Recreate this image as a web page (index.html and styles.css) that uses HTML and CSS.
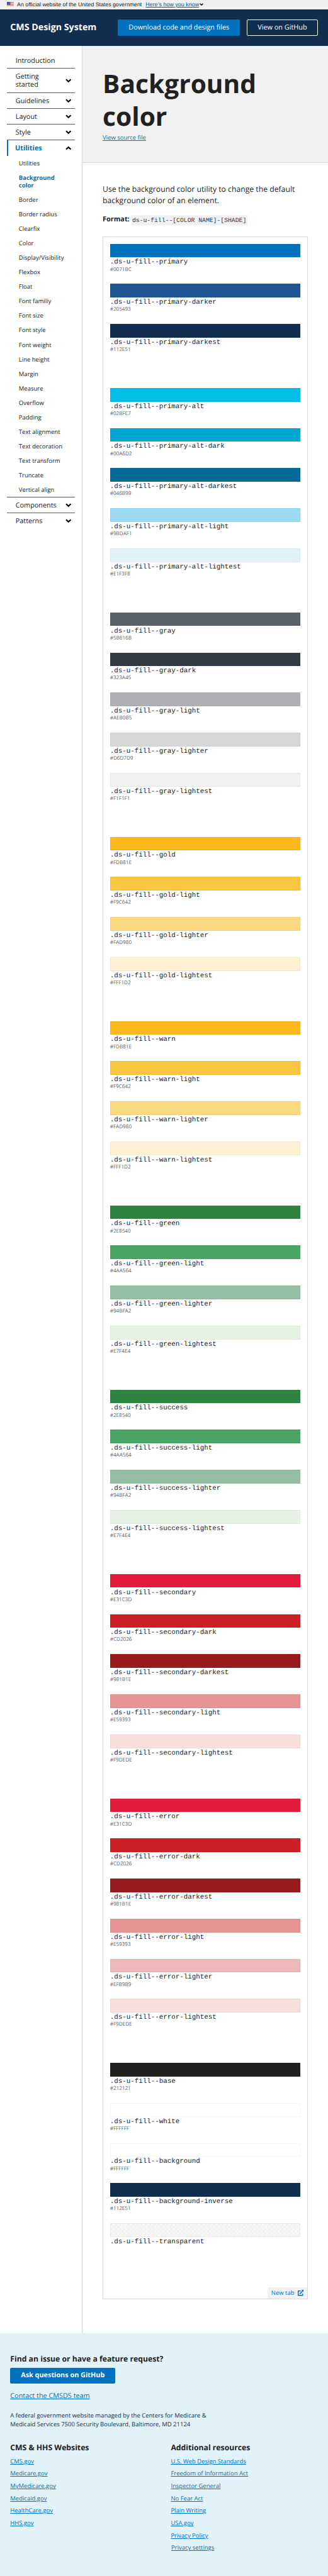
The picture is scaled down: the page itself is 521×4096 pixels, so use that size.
FILE: index.html
```html
<!DOCTYPE html>
<html lang="en">
<head>
<meta charset="utf-8">
<title>Background color - CMS Design System</title>
<link rel="stylesheet" href="styles.css">
</head>
<body>
<svg class="defs" width="0" height="0" aria-hidden="true">
  <symbol id="down" viewBox="0 0 14 10"><path d="M1.5 1.8 7 7.1l5.500-5.300" fill="none" stroke="currentColor" stroke-width="3.300"/></symbol>
  <symbol id="up" viewBox="0 0 14 10"><path d="M1.5 8.200 7 2.900l5.500 5.300" fill="none" stroke="currentColor" stroke-width="3.300"/></symbol>
</svg>

<div class="banner">
  <svg class="flag" viewBox="0 0 16 11"><path fill="#fff" d="M0 0h16v11H0z"/><path stroke="#db3e1f" d="M0 .5h16M0 2.500h16M0 4.500h16M0 6.500h16M0 8.500h16M0 10.500h16"/><path fill="#1e33b1" d="M0 0h8v7H0z"/><path stroke="#fff" stroke-width=".8" stroke-dasharray=".8 1.200" d="M.8 1.200h7M1.800 2.800h6M.8 4.400h7M1.800 5.900h6"/></svg>
  <span class="official">An official website of the United States government</span>
  <a class="know" href="#">Here’s how you know</a>
  <svg class="know-icon"><use href="#down"/></svg>
</div>

<header class="header">
  <div class="brand">CMS Design System</div>
  <div class="actions">
    <a class="button" href="#">Download code and design files</a>
    <a class="button button-inverse" href="#">View on GitHub</a>
  </div>
</header>

<div class="layout">
  <nav class="nav">
    <a class="item" href="#">Introduction</a>
    <a class="item" href="#"><span>Getting<br>started</span><svg class="chevron"><use href="#down"/></svg></a>
    <a class="item" href="#">Guidelines<svg class="chevron"><use href="#down"/></svg></a>
    <a class="item" href="#">Layout<svg class="chevron"><use href="#down"/></svg></a>
    <a class="item" href="#">Style<svg class="chevron"><use href="#down"/></svg></a>
    <a class="item item-open" href="#">Utilities<svg class="chevron"><use href="#up"/></svg></a>
    <div class="subnav">
      <a href="#">Utilities</a>
      <a class="current" href="#">Background<br>color</a>
      <a href="#">Border</a>
      <a href="#">Border radius</a>
      <a href="#">Clearfix</a>
      <a href="#">Color</a>
      <a href="#">Display/Visibility</a>
      <a href="#">Flexbox</a>
      <a href="#">Float</a>
      <a href="#">Font familiy</a>
      <a href="#">Font size</a>
      <a href="#">Font style</a>
      <a href="#">Font weight</a>
      <a href="#">Line height</a>
      <a href="#">Margin</a>
      <a href="#">Measure</a>
      <a href="#">Overflow</a>
      <a href="#">Padding</a>
      <a href="#">Text alignment</a>
      <a href="#">Text decoration</a>
      <a href="#">Text transform</a>
      <a href="#">Truncate</a>
      <a href="#">Vertical align</a>
    </div>
    <a class="item" href="#">Components<svg class="chevron"><use href="#down"/></svg></a>
    <a class="item item-last" href="#">Patterns<svg class="chevron"><use href="#down"/></svg></a>
  </nav>

  <main class="main">
    <div class="hero">
      <h1>Background<br>color</h1>
      <a class="source" href="#">View source file</a>
    </div>
    <div class="content">
      <p class="lead">Use the background color utility to change the default<br>background color of an element.</p>
      <p class="format"><b>Format:</b> <code>ds-u-fill--[COLOR NAME]-[SHADE]</code></p>

      <div class="example">
        <section class="group">
          <div class="swatch"><i class="bar blue"></i><code>.ds-u-fill--primary</code><small>#0071BC</small></div>
          <div class="swatch"><i class="bar blue-darker"></i><code>.ds-u-fill--primary-darker</code><small>#205493</small></div>
          <div class="swatch"><i class="bar navy"></i><code>.ds-u-fill--primary-darkest</code><small>#112E51</small></div>
        </section>
        <section class="group">
          <div class="swatch"><i class="bar cyan"></i><code>.ds-u-fill--primary-alt</code><small>#02BFE7</small></div>
          <div class="swatch"><i class="bar cyan-dark"></i><code>.ds-u-fill--primary-alt-dark</code><small>#00A6D2</small></div>
          <div class="swatch"><i class="bar cyan-darkest"></i><code>.ds-u-fill--primary-alt-darkest</code><small>#046B99</small></div>
          <div class="swatch"><i class="bar cyan-light"></i><code>.ds-u-fill--primary-alt-light</code><small>#9BDAF1</small></div>
          <div class="swatch"><i class="bar cyan-lightest"></i><code>.ds-u-fill--primary-alt-lightest</code><small>#E1F3F8</small></div>
        </section>
        <section class="group">
          <div class="swatch"><i class="bar gray"></i><code>.ds-u-fill--gray</code><small>#5B616B</small></div>
          <div class="swatch"><i class="bar gray-dark"></i><code>.ds-u-fill--gray-dark</code><small>#323A45</small></div>
          <div class="swatch"><i class="bar gray-light"></i><code>.ds-u-fill--gray-light</code><small>#AEB0B5</small></div>
          <div class="swatch"><i class="bar gray-lighter"></i><code>.ds-u-fill--gray-lighter</code><small>#D6D7D9</small></div>
          <div class="swatch"><i class="bar gray-lightest"></i><code>.ds-u-fill--gray-lightest</code><small>#F1F1F1</small></div>
        </section>
        <section class="group">
          <div class="swatch"><i class="bar gold"></i><code>.ds-u-fill--gold</code><small>#FDB81E</small></div>
          <div class="swatch"><i class="bar gold-light"></i><code>.ds-u-fill--gold-light</code><small>#F9C642</small></div>
          <div class="swatch"><i class="bar gold-lighter"></i><code>.ds-u-fill--gold-lighter</code><small>#FAD980</small></div>
          <div class="swatch"><i class="bar gold-lightest"></i><code>.ds-u-fill--gold-lightest</code><small>#FFF1D2</small></div>
        </section>
        <section class="group">
          <div class="swatch"><i class="bar gold"></i><code>.ds-u-fill--warn</code><small>#FDB81E</small></div>
          <div class="swatch"><i class="bar gold-light"></i><code>.ds-u-fill--warn-light</code><small>#F9C642</small></div>
          <div class="swatch"><i class="bar gold-lighter"></i><code>.ds-u-fill--warn-lighter</code><small>#FAD980</small></div>
          <div class="swatch"><i class="bar gold-lightest"></i><code>.ds-u-fill--warn-lightest</code><small>#FFF1D2</small></div>
        </section>
        <section class="group">
          <div class="swatch"><i class="bar green"></i><code>.ds-u-fill--green</code><small>#2E8540</small></div>
          <div class="swatch"><i class="bar green-light"></i><code>.ds-u-fill--green-light</code><small>#4AA564</small></div>
          <div class="swatch"><i class="bar green-lighter"></i><code>.ds-u-fill--green-lighter</code><small>#94BFA2</small></div>
          <div class="swatch"><i class="bar green-lightest"></i><code>.ds-u-fill--green-lightest</code><small>#E7F4E4</small></div>
        </section>
        <section class="group">
          <div class="swatch"><i class="bar green"></i><code>.ds-u-fill--success</code><small>#2E8540</small></div>
          <div class="swatch"><i class="bar green-light"></i><code>.ds-u-fill--success-light</code><small>#4AA564</small></div>
          <div class="swatch"><i class="bar green-lighter"></i><code>.ds-u-fill--success-lighter</code><small>#94BFA2</small></div>
          <div class="swatch"><i class="bar green-lightest"></i><code>.ds-u-fill--success-lightest</code><small>#E7F4E4</small></div>
        </section>
        <section class="group">
          <div class="swatch"><i class="bar red"></i><code>.ds-u-fill--secondary</code><small>#E31C3D</small></div>
          <div class="swatch"><i class="bar red-dark"></i><code>.ds-u-fill--secondary-dark</code><small>#CD2026</small></div>
          <div class="swatch"><i class="bar red-darkest"></i><code>.ds-u-fill--secondary-darkest</code><small>#981B1E</small></div>
          <div class="swatch"><i class="bar red-light"></i><code>.ds-u-fill--secondary-light</code><small>#E59393</small></div>
          <div class="swatch"><i class="bar red-lightest"></i><code>.ds-u-fill--secondary-lightest</code><small>#F9DEDE</small></div>
        </section>
        <section class="group">
          <div class="swatch"><i class="bar red"></i><code>.ds-u-fill--error</code><small>#E31C3D</small></div>
          <div class="swatch"><i class="bar red-dark"></i><code>.ds-u-fill--error-dark</code><small>#CD2026</small></div>
          <div class="swatch"><i class="bar red-darkest"></i><code>.ds-u-fill--error-darkest</code><small>#981B1E</small></div>
          <div class="swatch"><i class="bar red-light"></i><code>.ds-u-fill--error-light</code><small>#E59393</small></div>
          <div class="swatch"><i class="bar red-lighter"></i><code>.ds-u-fill--error-lighter</code><small>#EFB9B9</small></div>
          <div class="swatch"><i class="bar red-lightest"></i><code>.ds-u-fill--error-lightest</code><small>#F9DEDE</small></div>
        </section>
        <section class="group">
          <div class="swatch"><i class="bar base"></i><code>.ds-u-fill--base</code><small>#212121</small></div>
          <div class="swatch"><i class="bar white"></i><code>.ds-u-fill--white</code><small>#FFFFFF</small></div>
          <div class="swatch"><i class="bar white"></i><code>.ds-u-fill--background</code><small>#FFFFFF</small></div>
          <div class="swatch"><i class="bar navy"></i><code>.ds-u-fill--background-inverse</code><small>#112E51</small></div>
          <div class="swatch"><i class="bar checker"></i><code>.ds-u-fill--transparent</code></div>
        </section>
        <a class="new-tab" href="#">New tab
          <svg class="external" viewBox="0 0 14 14"><path d="M6.800 2.600H1.100v10.300h10.300V9" fill="none" stroke="currentColor" stroke-width="2.100"/><path d="M4.800 9.500 11 3.300" fill="none" stroke="currentColor" stroke-width="2.400"/><path d="M8 0h6v6z" fill="currentColor"/></svg>
        </a>
      </div>
    </div>
  </main>
</div>

<footer class="footer">
  <h2>Find an issue or have a feature request?</h2>
  <a class="button button-ask" href="#">Ask questions on GitHub</a>
  <a class="contact" href="#">Contact the CMSDS team</a>
  <p class="address">A federal government website managed by the Centers for Medicare &amp;<br>Medicaid Services 7500 Security Boulevard, Baltimore, MD 21124</p>
  <div class="columns">
    <div class="column">
      <h2>CMS &amp; HHS Websites</h2>
      <ul>
        <li><a href="#">CMS.gov</a></li>
        <li><a href="#">Medicare.gov</a></li>
        <li><a href="#">MyMedicare.gov</a></li>
        <li><a href="#">Medicaid.gov</a></li>
        <li><a href="#">HealthCare.gov</a></li>
        <li><a href="#">HHS.gov</a></li>
      </ul>
    </div>
    <div class="column">
      <h2>Additional resources</h2>
      <ul>
        <li><a href="#">U.S. Web Design Standards</a></li>
        <li><a href="#">Freedom of Information Act</a></li>
        <li><a href="#">Inspector General</a></li>
        <li><a href="#">No Fear Act</a></li>
        <li><a href="#">Plain Writing</a></li>
        <li><a href="#">USA.gov</a></li>
        <li><a href="#">Privacy Policy</a></li>
        <li class="settings"><a href="#">Privacy settings</a></li>
      </ul>
    </div>
  </div>
</footer>
</body>
</html>
```
FILE: styles.css
```css
* { box-sizing: border-box; }

html { font-size: 6.7845px; }

body {
  margin: 0;
  background: #fff;
  color: #212121;
  font: 1.6rem/1.5 "Open Sans", sans-serif;
  text-rendering: geometricPrecision;
}

h1, h2, p, ul { margin: 0; padding: 0; font-weight: 400; }
ul { list-style: none; }
a { color: #0071bc; text-underline-offset: auto; text-decoration-thickness: 1px; }
.defs { display: block; position: absolute; }

/* Government banner */
.banner {
  display: flex;
  align-items: center;
  height: 2.2rem;
  padding-left: 1.6rem;
  background: #f0f0f0;
  font-family: "Liberation Sans", Arial, sans-serif;
  font-size: 1.293rem;
  line-height: 2.2rem;
  white-space: nowrap;
}
.flag { width: 1.6rem; height: 1.1rem; margin: -.3rem .8rem 0 0; }
.official { width: 30.1rem; }
.know { font-size: 1.32rem; color: #005ea2; }
.know-icon { width: .9rem; height: .65rem; margin-left: .2rem; color: #000; }

/* Site header */
.header {
  display: flex;
  justify-content: space-between;
  align-items: center;
  height: 8.6rem;
  padding: 0 2.4rem;
  background: #112e51;
  white-space: nowrap;
}
.brand { color: #fff; font-size: 2.1rem; font-weight: 700; }
.actions { display: flex; gap: 1.6rem; }
.button {
  display: flex;
  align-items: center;
  justify-content: center;
  width: 28.6rem;
  height: 3.8rem;
  border-radius: .3rem;
  background: #0071bc;
  color: #fff;
  font-size: 1.6rem;
  text-decoration: none;
  white-space: nowrap;
}
.button-inverse { width: 16.6rem; border: 1px solid #fff; background: transparent; }

/* Page columns */
.layout { display: flex; height: 536.1rem; }
.nav {
  flex: 0 0 19.2rem;
  padding: 1.58rem 1.6rem 0;
  border-right: 1px solid #d6d7d9;
}
.item {
  display: flex;
  align-items: center;
  justify-content: space-between;
  width: 15.9rem;
  min-height: 3.7rem;
  padding: .85rem .8rem .85rem 2.05rem;
  box-shadow: inset 0 -1px #5b616b;
  color: #212121;
  line-height: 2rem;
  text-decoration: none;
}
.item + .item { min-height: 3.7rem; }
.chevron { flex: none; width: 1.4rem; height: 1rem; color: #000; }
.item-open {
  padding-left: 1.65rem;
  border-left: .4rem solid #0071bc;
  box-shadow: none;
  color: #0071bc;
  font-weight: 700;
}
.item-last { box-shadow: none; }
.subnav { width: 15.9rem; box-shadow: inset 0 -1px #5b616b; }
.subnav a {
  display: block;
  padding: .8rem 0 .8rem 2.8rem;
  color: #212121;
  font-size: 1.4rem;
  line-height: 1.8rem;
  text-decoration: none;
  white-space: nowrap;
}
.subnav .current { color: #0071bc; font-weight: 700; }

/* Title area */
.main { flex: 1; min-width: 0; }
.hero {
  height: 27.4rem;
  padding: 4.76rem 0 0 4.8rem;
  border-bottom: 1px solid #d6d7d9;
  background: #f1f1f1;
}
h1 { font-size: 6rem; font-weight: 700; line-height: 7.8rem; }
.source { display: block; width: max-content; margin-top: .1rem; font-size: 1.4rem; line-height: 2.2rem; }

.content { padding: 4.8rem 4.8rem 0; }
.lead { font-size: 1.8rem; line-height: 2.7rem; white-space: nowrap; }
.format { margin-top: 1.88rem; line-height: 2.4rem; white-space: nowrap; }
.format code {
  padding: .38rem .2rem .4rem;
  background: #f1f1f1;
  color: #323a45;
  font-family: "Liberation Mono", monospace;
  font-size: 1.44rem;
}

/* Swatch example frame */
.example {
  display: flex;
  flex-direction: column;
  width: 48rem;
  height: 483.5rem;
  margin-top: 2.62rem;
  padding: calc(1.7rem - 1px) calc(1.7rem - 1px) 0;
  border: 1px solid #d6d7d9;
}
.group { margin-bottom: 5.6rem; }
.swatch { display: flex; flex-direction: column; height: 9.4rem; white-space: nowrap; }
.bar { flex: none; height: 3.2rem; border: 1px solid rgba(0, 0, 0, .04); }
.swatch code {
  margin-top: .3rem;
  font-family: "Liberation Mono", "Courier New", monospace;
  font-size: 1.6rem;
  line-height: 1.8rem;
}
.swatch small { color: #5b616b; font-size: 1.2rem; line-height: 1.46rem; }

.blue { background-color: #0071bc; }
.blue-darker { background-color: #205493; }
.navy { background-color: #112e51; }
.cyan { background-color: #02bfe7; }
.cyan-dark { background-color: #00a6d2; }
.cyan-darkest { background-color: #046b99; }
.cyan-light { background-color: #9bdaf1; }
.cyan-lightest { background-color: #e1f3f8; }
.gray { background-color: #5b616b; }
.gray-dark { background-color: #323a45; }
.gray-light { background-color: #aeb0b5; }
.gray-lighter { background-color: #d6d7d9; }
.gray-lightest { background-color: #f1f1f1; }
.gold { background-color: #fdb81e; }
.gold-light { background-color: #f9c642; }
.gold-lighter { background-color: #fad980; }
.gold-lightest { background-color: #fff1d2; }
.green { background-color: #2e8540; }
.green-light { background-color: #4aa564; }
.green-lighter { background-color: #94bfa2; }
.green-lightest { background-color: #e7f4e4; }
.red { background-color: #e31c3d; }
.red-dark { background-color: #cd2026; }
.red-darkest { background-color: #981b1e; }
.red-light { background-color: #e59393; }
.red-lighter { background-color: #efb9b9; }
.red-lightest { background-color: #f9dede; }
.base { background-color: #212121; }
.white { background-color: #fff; }
.checker { background: repeating-conic-gradient(#f8f8f8 0 25%, #f1f1f1 0 50%) 0 0 / 1rem 1rem; }

.new-tab {
  display: flex;
  align-items: center;
  justify-content: space-between;
  align-self: flex-end;
  width: 9.2rem;
  height: 3rem;
  margin: auto calc(1px - 1.7rem) 0 0;
  padding: 0 .8rem;
  background: #f1f1f1;
  font-size: 1.4rem;
  text-decoration: none;
  white-space: nowrap;
}
.external { width: 1.4rem; height: 1.4rem; }

/* Footer */
.footer {
  height: 56.8rem;
  padding: 4.6rem 2.4rem 0;
  background: #e1f3f8;
}
h2 { font-size: 1.8rem; font-weight: 700; line-height: 2.7rem; }
.button-ask { width: 24.6rem; margin-top: .7rem; font-weight: 700; }
.contact { display: block; width: max-content; margin-top: 1.7rem; line-height: 2.4rem; }
.address { margin-top: 2.35rem; color: #112e51; font-size: 1.4rem; line-height: 2.1rem; white-space: nowrap; }
.columns { display: grid; grid-template-columns: 37.6rem 1fr; margin-top: 3rem; }
.column li { height: 2.9rem; font-size: 1.4rem; line-height: 2.9rem; }
.column ul { padding-top: .35rem; }
.settings { padding-left: .1rem; }
```
